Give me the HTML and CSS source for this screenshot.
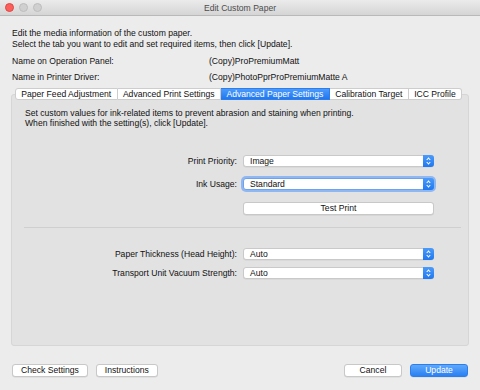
FILE: index.html
```html
<!DOCTYPE html>
<html lang="en">
<head>
    <meta charset="UTF-8">
    <title>Edit Custom Paper</title>
    <link rel="stylesheet" href="styles.css">
</head>
<body>
    <div class="window">
        <!-- Barra de titulo -->
        <div class="titlebar">
            <div class="lights">
                <span class="light red"></span>
                <span class="light"></span>
                <span class="light"></span>
            </div>
            <div class="title">Edit Custom Paper</div>
        </div>

        <div class="content">
            <p class="intro">Edit the media information of the custom paper.<br>
                Select the tab you want to edit and set required items, then click [Update].</p>

            <div class="names">
                <div class="name-row"><span class="name-label">Name on Operation Panel:</span><span>(Copy)ProPremiumMatt</span></div>
                <div class="name-row"><span class="name-label">Name in Printer Driver:</span><span>(Copy)PhotoPprProPremiumMatte A</span></div>
            </div>

            <div class="tabbox">
                <div class="tabs">
                    <span class="tab">Paper Feed Adjustment</span>
                    <span class="tab">Advanced Print Settings</span>
                    <span class="tab active">Advanced Paper Settings</span>
                    <span class="tab">Calibration Target</span>
                    <span class="tab">ICC Profile</span>
                </div>
                <div class="panel">
                    <p class="panel-text">Set custom values for ink-related items to prevent abrasion and staining when printing.<br>
                        When finished with the setting(s), click [Update].</p>

                    <div class="form-grid first">
                        <label>Print Priority:</label>
                        <div class="select"><span>Image</span><i class="stepper"></i></div>
                        <label>Ink Usage:</label>
                        <div class="select focus"><span>Standard</span><i class="stepper"></i></div>
                        <span></span>
                        <button class="btn wide">Test Print</button>
                    </div>

                    <hr class="sep">

                    <div class="form-grid second">
                        <label>Paper Thickness (Head Height):</label>
                        <div class="select"><span>Auto</span><i class="stepper"></i></div>
                        <label>Transport Unit Vacuum Strength:</label>
                        <div class="select"><span>Auto</span><i class="stepper"></i></div>
                    </div>
                </div>
            </div>

            <div class="footer">
                <button class="btn">Check Settings</button>
                <button class="btn">Instructions</button>
                <span class="spacer"></span>
                <button class="btn">Cancel</button>
                <button class="btn primary">Update</button>
            </div>
        </div>
    </div>
</body>
</html>
```

FILE: styles.css
```css
body {
    margin: 0;
    padding: 0;
    background-color: #ececec;
    font-family: "Liberation Sans", Arial, sans-serif;
    font-size: 8.6px;
    color: #111;
}

.window {
    width: 480px;
    height: 390px;
    background: #ececec;
    overflow: hidden;
}

.titlebar {
    height: 15px;
    background: linear-gradient(#ebebeb, #d5d5d5);
    border-bottom: 1px solid #b9b9b9;
    display: flex;
    align-items: center;
    position: relative;
}

.lights {
    display: flex;
    gap: 5px;
    padding-left: 5px;
}

.light {
    width: 7px;
    height: 7px;
    border-radius: 50%;
    background: #d0d0d0;
    border: 0.5px solid #bdbdbd;
}

.light.red {
    background: #fc605c;
    border-color: #df4744;
}

.title {
    position: absolute;
    left: 0;
    right: 0;
    text-align: center;
    color: #4d4d4d;
    font-size: 8.6px;
}

.content {
    padding: 0 12px;
}

.intro {
    margin: 12px 0 0 0;
    line-height: 11px;
}

.names {
    margin-top: 3px;
}

.name-row {
    display: flex;
    height: 16px;
    align-items: center;
}

.name-label {
    width: 197px;
}

/* Abas */
.tabbox {
    margin-top: 3px;
    padding-top: 6px;
    position: relative;
}

.tabs {
    display: flex;
    justify-content: center;
    position: absolute;
    top: 0;
    left: 0;
    right: 0;
    z-index: 1;
    padding-right: 3px;
}

.tab {
    height: 12px;
    box-sizing: border-box;
    line-height: 10px;
    padding: 0 5.4px;
    background: #fff;
    border: 1px solid #cdcdcd;
    border-left: none;
    white-space: nowrap;
}

.tab:first-child {
    border-left: 1px solid #cdcdcd;
    border-radius: 3px 0 0 3px;
}

.tab:last-child {
    border-radius: 0 3px 3px 0;
}

.tab.active {
    background: linear-gradient(#4c9bfb, #1f78f0);
    border-color: #2d7ded;
    color: #fff;
}

.panel {
    margin-left: -1px;
    margin-right: -1px;
    height: 252px;
    background: #e2e2e2;
    border: 1px solid #d6d6d6;
    border-radius: 3px;
    box-sizing: border-box;
    padding: 13px 34px 0 13px;
}

.panel-text {
    margin: 0;
    line-height: 10px;
}

.form-grid {
    display: grid;
    grid-template-columns: 1fr 191px;
    column-gap: 6px;
    row-gap: 11px;
    align-items: center;
}

.form-grid.first {
    margin-top: 27px;
}

.form-grid.second {
    row-gap: 7px;
}

.form-grid label {
    text-align: right;
    white-space: nowrap;
}

.select {
    height: 12px;
    background: #fff;
    border: 1px solid #c9c9c9;
    border-radius: 3px;
    box-sizing: border-box;
    display: flex;
    align-items: center;
    justify-content: space-between;
    padding-left: 6px;
    box-shadow: 0 0.5px 0 rgba(0, 0, 0, 0.08);
}

.select.focus {
    box-shadow: 0 0 0 2px #8fb8f2;
    border-color: #6fa2ea;
}

.stepper {
    width: 11px;
    height: 12px;
    margin-right: -1px;
    border-radius: 0 3px 3px 0;
    background: linear-gradient(#4c9bfb, #1f78f0);
    position: relative;
}

.stepper::before,
.stepper::after {
    content: "";
    position: absolute;
    left: 4px;
    width: 2px;
    height: 2px;
    border-left: 1px solid #fff;
    border-top: 1px solid #fff;
}

.stepper::before {
    top: 3px;
    transform: rotate(45deg);
}

.stepper::after {
    top: 6px;
    transform: rotate(-135deg);
}

.btn {
    font-family: inherit;
    font-size: 8.6px;
    color: #111;
    height: 13px;
    padding: 0 8px;
    background: #fff;
    border: 1px solid #c8c8c8;
    border-radius: 3px;
    box-shadow: 0 0.5px 0 rgba(0, 0, 0, 0.1);
    line-height: 11px;
}

.btn.wide {
    width: 100%;
    margin-top: 1px;
}

.btn.primary {
    background: linear-gradient(#5fa8fb, #2a80f3);
    border-color: #2c7ded;
    color: #fff;
}

.sep {
    border: none;
    border-top: 1px solid #cfcfcf;
    margin: 12px -27px 20px -1px;
}

.footer {
    display: flex;
    gap: 8px;
    margin-top: 18px;
}

.footer .btn {
    min-width: 58px;
}

.spacer {
    flex: 1;
}
```
